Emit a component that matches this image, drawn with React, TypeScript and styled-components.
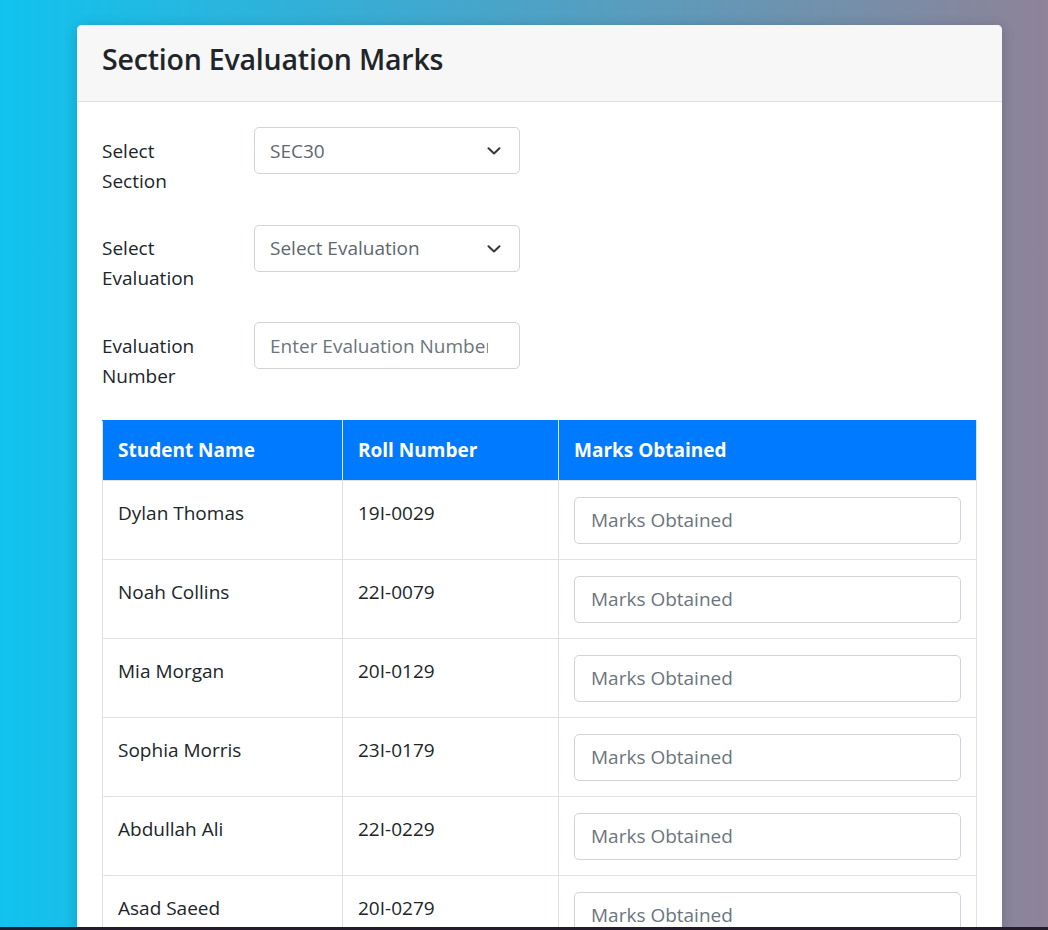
import React from "react";
import styled, { createGlobalStyle } from "styled-components";

const GlobalStyle = createGlobalStyle`
  html, body {
    margin: 0;
    padding: 0;
  }
  body {
    min-height: 100vh;
    background: linear-gradient(to right, #10c3ee 0%, #3fa9d0 40%, #8e8398 100%);
    background-attachment: fixed;
    font-family: "Open Sans", "Noto Sans", sans-serif;
    color: #212529;
  }
  * { box-sizing: border-box; }
`;

const Page = styled.div`
  padding: 25px 46px 40px 77px;
`;

const Card = styled.div`
  width: 925px;
  background: #fff;
  border-radius: 5px;
  box-shadow: 0 2px 14px rgba(0, 0, 0, 0.18);
  overflow: hidden;
`;

const CardHeader = styled.div`
  height: 77px;
  padding: 13px 25px 0;
  background: #f7f7f7;
  border-bottom: 1px solid #dfdfdf;
`;

const Title = styled.h3`
  margin: 0;
  font-size: 28.5px;
  line-height: 42px;
  font-weight: 600;
  color: #212529;
  letter-spacing: -0.2px;
`;

const CardBody = styled.div`
  padding: 25px;
`;

const FormRow = styled.div`
  display: grid;
  grid-template-columns: 152px 266px;
  margin-bottom: 20px;
`;

const Label = styled.label`
  padding: 8.5px 30px 9px 0;
  font-size: 19px;
  line-height: 30px;
  color: #212529;
`;

const SelectWrap = styled.div`
  position: relative;
  height: 47px;
`;

const Select = styled.select`
  appearance: none;
  -webkit-appearance: none;
  width: 100%;
  height: 47px;
  padding: 0 40px 0 15px;
  font-family: inherit;
  font-size: 19px;
  color: #60676e;
  background: #fff;
  border: 1px solid #ced4da;
  border-radius: 5px;
  outline: none;
`;

const Chevron = styled.svg`
  position: absolute;
  right: 19px;
  top: 20px;
  width: 14px;
  height: 8px;
  pointer-events: none;
`;

const TextInput = styled.input<{ $padRight?: number }>`
  width: 100%;
  height: 47px;
  padding: 0 ${(p) => p.$padRight ?? 15}px 0 15px;
  font-family: inherit;
  font-size: 19px;
  color: #495057;
  background: #fff;
  border: 1px solid #ced4da;
  border-radius: 5px;
  outline: none;
  &::placeholder {
    color: #6c757d;
  }
`;

const Table = styled.table`
  width: 874px;
  margin-top: 0;
  border-collapse: collapse;
  table-layout: fixed;
`;

const Th = styled.th<{ $w: number }>`
  width: ${(p) => p.$w}px;
  height: 60px;
  padding: 0 15px;
  background: #007bff;
  color: #fff;
  font-size: 19px;
  font-weight: 700;
  text-align: left;
  border: 1px solid #dee2e6;
  border-top-color: #007bff;
`;

const Td = styled.td`
  padding: 16px 15px 15px 15px;
  vertical-align: top;
  font-size: 19px;
  line-height: 32px;
  color: #212529;
  border: 1px solid #dee2e6;
`;

const MarksInput = styled(TextInput)`
  display: block;
  height: 47px;
  padding: 0 16px;
`;

const BottomEdge = styled.div`
  position: fixed;
  left: 0;
  right: 0;
  bottom: 0;
  height: 3px;
  background: #241c2a;
`;

const students = [
  { name: "Dylan Thomas", roll: "19I-0029" },
  { name: "Noah Collins", roll: "22I-0079" },
  { name: "Mia Morgan", roll: "20I-0129" },
  { name: "Sophia Morris", roll: "23I-0179" },
  { name: "Abdullah Ali", roll: "22I-0229" },
  { name: "Asad Saeed", roll: "20I-0279" },
];

const ChevronIcon = () => (
  <Chevron viewBox="0 0 14 8">
    <path d="M1.5 1.2 L7 6.5 L12.5 1.2" fill="none" stroke="#343a40" strokeWidth="2" strokeLinecap="round" strokeLinejoin="round" />
  </Chevron>
);

export default function App() {
  return (
    <>
      <GlobalStyle />
      <Page>
        <Card>
          <CardHeader>
            <Title>Section Evaluation Marks</Title>
          </CardHeader>
          <CardBody>
            <FormRow>
              <Label>Select Section</Label>
              <SelectWrap>
                <Select defaultValue="SEC30">
                  <option value="SEC30">SEC30</option>
                </Select>
                <ChevronIcon />
              </SelectWrap>
            </FormRow>
            <FormRow>
              <Label>Select Evaluation</Label>
              <SelectWrap>
                <Select defaultValue="">
                  <option value="">Select Evaluation</option>
                </Select>
                <ChevronIcon />
              </SelectWrap>
            </FormRow>
            <FormRow>
              <Label>Evaluation Number</Label>
              <TextInput $padRight={31} placeholder="Enter Evaluation Number" />
            </FormRow>
            <Table>
              <thead>
                <tr>
                  <Th $w={240}>Student Name</Th>
                  <Th $w={216}>Roll Number</Th>
                  <Th $w={418}>Marks Obtained</Th>
                </tr>
              </thead>
              <tbody>
                {students.map((s) => (
                  <tr key={s.roll}>
                    <Td>{s.name}</Td>
                    <Td>{s.roll}</Td>
                    <Td>
                      <MarksInput placeholder="Marks Obtained" />
                    </Td>
                  </tr>
                ))}
              </tbody>
            </Table>
          </CardBody>
        </Card>
      </Page>
      <BottomEdge />
    </>
  );
}
